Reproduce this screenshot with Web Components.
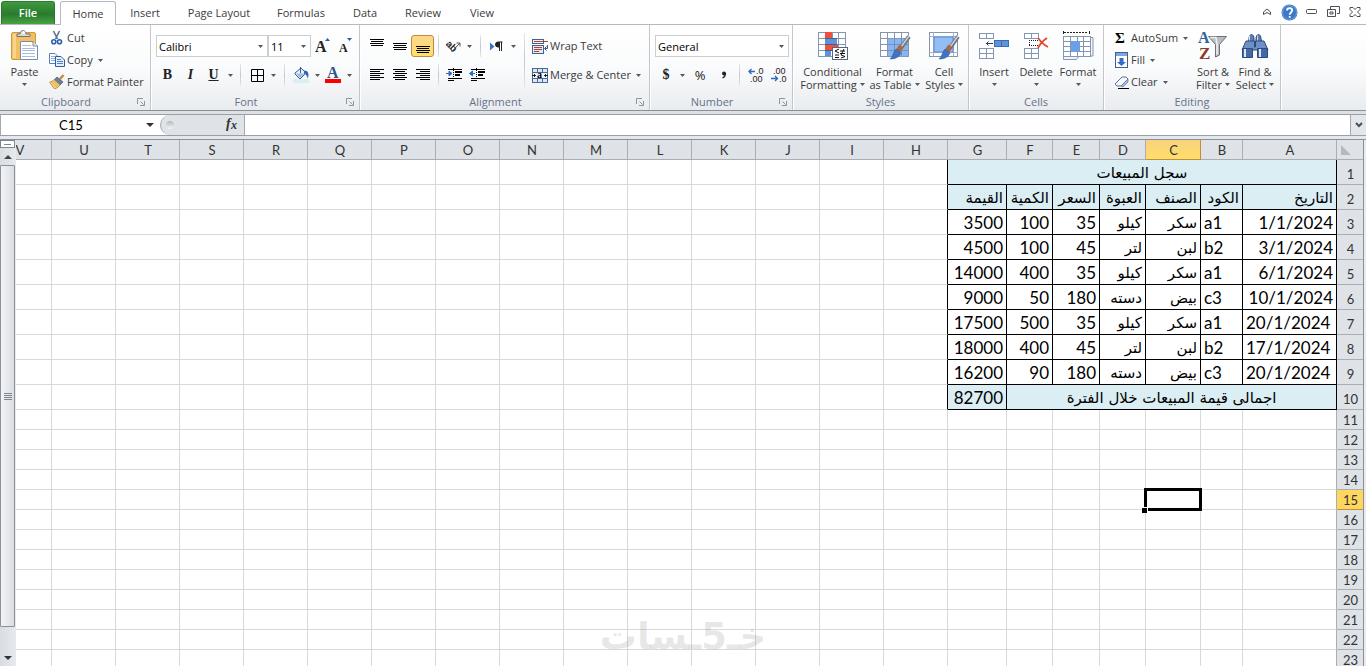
<!DOCTYPE html>
<html lang="en">
<head>
<meta charset="utf-8">
<meta name="viewport" content="width=device-width, initial-scale=1">
<title>Sales workbook</title>
<style>
  body { margin: 0; background: #fff; font-family: "Open Sans", "Noto Sans", sans-serif; font-size: 11px; color: #3b3b3b; }
</style>
</head>
<body>
<xl-app></xl-app>

<template id="app-template">
  <style>
    :host { display: flex; flex-direction: column; height: 100vh; overflow: hidden; }
    .tabs { display: flex; align-items: stretch; height: 25px; box-sizing: border-box; border-bottom: 1px solid #b6babf; }
    .window { margin-left: auto; display: flex; align-items: center; gap: 5px; padding-right: 3px; }
    .ribbon { display: flex; height: 85px; flex: none; background: linear-gradient(#ffffff, #fafbfc 50%, #e9ecef); border-bottom: 1px solid #8b9097; }
    .row { display: flex; align-items: center; height: 22px; }
    .rows { display: flex; flex-direction: column; gap: 7px; padding-top: 10px; }
    .list { display: flex; flex-direction: column; padding-top: 2px; }
    .mark { display: inline-block; font-family: "Liberation Serif", serif; font-weight: bold; font-size: 14px; line-height: 22px; color: #222; }
    .i { font-style: italic; }
    .u { text-decoration: underline; }
    .sep-tall { align-self: flex-start; margin-top: 8px; }
    xl-sheet { flex: 1; min-height: 0; }
  </style>
  <nav class="tabs">
    <xl-tab kind="file" style="--w:54px">File</xl-tab>
    <xl-tab kind="active" style="--w:56px">Home</xl-tab>
    <xl-tab style="--w:58px">Insert</xl-tab>
    <xl-tab style="--w:90px">Page Layout</xl-tab>
    <xl-tab style="--w:74px">Formulas</xl-tab>
    <xl-tab style="--w:54px">Data</xl-tab>
    <xl-tab style="--w:62px">Review</xl-tab>
    <xl-tab style="--w:56px">View</xl-tab>
    <div class="window">
      <xl-tool label="Minimize ribbon" style="--w:16px"><xl-icon name="caret"></xl-icon></xl-tool>
      <xl-tool label="Help" style="--w:18px"><xl-icon name="help"></xl-icon></xl-tool>
      <xl-tool label="Minimize window" style="--w:16px"><xl-icon name="min"></xl-icon></xl-tool>
      <xl-tool label="Restore window" style="--w:18px"><xl-icon name="restore"></xl-icon></xl-tool>
      <xl-tool label="Close window" style="--w:16px"><xl-icon name="close"></xl-icon></xl-tool>
    </div>
  </nav>
  <div class="ribbon">
    <xl-group label="Clipboard" launcher style="--group:151px;--pad:4px">
      <xl-big icon="paste" below style="--w:41px">Paste</xl-big>
      <div class="list" style="padding-left:4px">
        <xl-item icon="cut">Cut</xl-item>
        <xl-item icon="copy" menu>Copy</xl-item>
        <xl-item icon="painter">Format Painter</xl-item>
      </div>
    </xl-group>
    <xl-group label="Font" launcher style="--group:209px;--pad:5px">
      <div class="rows">
        <div class="row">
          <xl-select label="Font name" value="Calibri" style="--w:112px"></xl-select>
          <xl-select label="Font size" value="11" style="--w:43px"></xl-select>
          <xl-tool label="Grow font"><xl-icon name="grow"></xl-icon></xl-tool>
          <xl-tool label="Shrink font"><xl-icon name="shrink"></xl-icon></xl-tool>
        </div>
        <div class="row">
          <xl-tool label="Bold"><span class="mark">B</span></xl-tool>
          <xl-tool label="Italic"><span class="mark i">I</span></xl-tool>
          <xl-tool label="Underline"><span class="mark u">U</span></xl-tool>
          <xl-drop></xl-drop><xl-sep style="--w:11px"></xl-sep>
          <xl-tool label="Borders" style="--w:22px"><xl-icon name="borders"></xl-icon></xl-tool>
          <xl-drop></xl-drop><xl-sep></xl-sep>
          <xl-tool label="Fill color" style="--w:22px"><xl-icon name="bucket"></xl-icon></xl-tool>
          <xl-drop></xl-drop>
          <xl-tool label="Font color" style="--w:22px"><xl-icon name="fontcolor"></xl-icon></xl-tool>
          <xl-drop></xl-drop>
        </div>
      </div>
    </xl-group>
    <xl-group label="Alignment" launcher style="--group:290px;--pad:5px">
      <div class="rows">
        <div class="row">
          <xl-tool label="Top align"><xl-icon name="vtop"></xl-icon></xl-tool>
          <xl-tool label="Middle align"><xl-icon name="vmid"></xl-icon></xl-tool>
          <xl-tool label="Bottom align" pressed><xl-icon name="vbot"></xl-icon></xl-tool>
          <xl-sep style="--w:8px"></xl-sep>
          <xl-tool label="Orientation" style="--w:22px"><xl-icon name="orient"></xl-icon></xl-tool>
          <xl-drop></xl-drop><xl-sep></xl-sep>
          <xl-tool label="Text direction" style="--w:20px"><xl-icon name="rtl"></xl-icon></xl-tool>
          <xl-drop style="--w:14px"></xl-drop>
        </div>
        <div class="row">
          <xl-tool label="Align left"><xl-icon name="left"></xl-icon></xl-tool>
          <xl-tool label="Center"><xl-icon name="center"></xl-icon></xl-tool>
          <xl-tool label="Align right"><xl-icon name="right"></xl-icon></xl-tool>
          <xl-sep style="--w:8px"></xl-sep>
          <xl-tool label="Increase indent"><xl-icon name="indent"></xl-icon></xl-tool>
          <xl-tool label="Decrease indent"><xl-icon name="outdent"></xl-icon></xl-tool>
        </div>
      </div>
      <xl-sep class="sep-tall" style="--w:8px;--h:54px"></xl-sep>
      <div class="rows" style="padding-left:4px">
        <xl-item icon="wrap">Wrap Text</xl-item>
        <xl-item icon="merge" menu>Merge &amp; Center</xl-item>
      </div>
    </xl-group>
    <xl-group label="Number" launcher style="--group:143px;--pad:5px">
      <div class="rows">
        <div class="row"><xl-select label="Number format" value="General" style="--w:134px"></xl-select></div>
        <div class="row">
          <xl-tool label="Accounting format" style="--w:22px"><span class="mark">$</span></xl-tool>
          <xl-drop></xl-drop>
          <xl-tool label="Percent style" style="--w:26px"><span style="font-size:13px;color:#222">%</span></xl-tool>
          <xl-tool label="Comma style" style="--w:22px"><xl-icon name="comma"></xl-icon></xl-tool>
          <xl-sep style="--w:9px"></xl-sep>
          <xl-tool label="Increase decimal"><xl-icon name="decinc"></xl-icon></xl-tool>
          <xl-tool label="Decrease decimal"><xl-icon name="decdec"></xl-icon></xl-tool>
        </div>
      </div>
    </xl-group>
    <xl-group label="Styles" style="--group:176px;--pad:6px">
      <xl-big icon="cond" style="--w:67px">Conditional<span slot="more">Formatting</span></xl-big>
      <xl-big icon="fmttable" style="--w:57px">Format<span slot="more">as Table</span></xl-big>
      <xl-big icon="cellstyles" style="--w:42px">Cell<span slot="more">Styles</span></xl-big>
    </xl-group>
    <xl-group label="Cells" style="--group:135px;--pad:4px">
      <xl-big icon="insert" below style="--w:42px">Insert</xl-big>
      <xl-big icon="delete" below style="--w:42px">Delete</xl-big>
      <xl-big icon="format" below style="--w:42px">Format</xl-big>
    </xl-group>
    <xl-group label="Editing" style="--group:177px;--pad:9px">
      <div class="list" style="width:79px">
        <xl-item icon="sum" menu>AutoSum</xl-item>
        <xl-item icon="fill" menu>Fill</xl-item>
        <xl-item icon="clear" menu>Clear</xl-item>
      </div>
      <xl-big icon="sort" style="--w:42px">Sort &amp;<span slot="more">Filter</span></xl-big>
      <xl-big icon="find" style="--w:42px">Find &amp;<span slot="more">Select</span></xl-big>
    </xl-group>
  </div>
  <xl-formula></xl-formula>
  <xl-sheet></xl-sheet>
</template>

<script>
const NAVY = '#2f4a78';
const grid = (x, y, w, h, cols, rows, fill = '#fff', line = '#8596b3') => {
  let d = '';
  for (let c = 0; c <= cols; c++) d += `M${x + Math.round(c * w / cols) + .5} ${y}v${h + 1}`;
  for (let r = 0; r <= rows; r++) d += `M${x} ${y + Math.round(r * h / rows) + .5}h${w + 1}`;
  return `<rect x="${x}" y="${y}" width="${w}" height="${h}" fill="${fill}"/><path d="${d}" stroke="${line}" fill="none"/>`;
};
const bars = (list, color = '#000') => list.map(([x, y, w]) => `<rect x="${x}" y="${y}" width="${w}" height="1" fill="${color}"/>`).join('');
const brush = `<path d="M29 5.500L21 17" stroke="#6f7780" stroke-width="4"/><path d="M29 5L21 16" stroke="#c9ced4" stroke-width="1.500"/><path d="M21.500 15l-3.500 5" stroke="#a9683e" stroke-width="5"/><path d="M16 18l5 4c-2 4-5 6-11 6 3-2 3-7 6-10z" fill="#3f74c4" stroke="#2c5596" stroke-width=".5"/>`;

/* name: [width, height, markup] */
const ICONS = {
  caret: [10, 8, '<path d="M1.500 4L5 1l3.500 3v2.500L5 4.500 1.500 6.500z" fill="#fff" stroke="#4b4f55"/>'],
  help: [17, 17, '<circle cx="8.500" cy="8.500" r="8" fill="#3d78c8"/><circle cx="8.500" cy="8.500" r="7" fill="none" stroke="#6c9ee0"/><path d="M6 6.500c0-3.200 5.200-3.200 5.200 0 0 2-2.500 2-2.500 4.200M8.700 12v1.800" stroke="#fff" stroke-width="1.800" fill="none"/>'],
  min: [11, 6, '<rect x=".5" y=".5" width="10" height="4" rx="1" fill="#fff" stroke="#4b4f55"/>'],
  restore: [13, 12, '<path d="M3.500 3V.5h9v7H10" fill="none" stroke="#4b4f55"/><path d="M.5 3.500h8v7h-8zM3 6h3v2H3z" fill="#fff" stroke="#4b4f55"/>'],
  close: [12, 10, '<path d="M1 .5h3l2 2 2-2h3v2L8.500 5 11 7.500v2H8L6 7.500l-2 2H1v-2L3.500 5 1 2.500z" fill="#fff" stroke="#4b4f55"/>'],
  paste: [28, 32, '<rect x=".5" y="2.500" width="24" height="27" rx="1.500" fill="#f2c063" stroke="#cf993e"/><path d="M2 4h3v24H2z" fill="#f8d48c"/><path d="M6 6.500V4h3c0-4.500 6-4.500 6 0h4v2.500z" fill="#d8dadd" stroke="#6e7278"/><circle cx="12.500" cy="2.500" r="1.500" fill="#fff"/><path d="M9.500 11.500H22l4.500 4.500v13.500h-17z" fill="#fff" stroke="#7c8ba3"/><path d="M22 11.500V16h4.500" fill="#dfe8f5" stroke="#7c8ba3"/><path d="M11 15.500h9M11 18.500h13M11 20.500h13M11 23.500h13M11 26.500h13" stroke="#a9bddb"/>'],
  cut: [12, 14, '<path d="M2.500 0l4 8M8.500 0l-4 8" stroke="#5d7391" stroke-width="1.600"/><circle cx="2.800" cy="10.800" r="2" fill="none" stroke="#2a5db0" stroke-width="1.600"/><circle cx="8.500" cy="10.800" r="2" fill="none" stroke="#2a5db0" stroke-width="1.600"/>'],
  copy: [16, 14, '<path d="M.5.500H6L8.500 3v7.500h-8z" fill="#fff" stroke="#5c7db1"/><path d="M2 3.500h4M2 5.500h5M2 7.500h5" stroke="#8db0e2"/><path d="M6.500 3.500H12L15.500 7v6.500h-9z" fill="#e6effb" stroke="#2f5ea3"/><path d="M8 6.500h4M8 8.500h6M8 10.500h6" stroke="#4b82cc"/>'],
  painter: [16, 14, '<path d="M14.500 0L11 4" stroke="#c78c3c" stroke-width="2.500"/><path d="M8 2l6 5-3 3-6-5z" fill="#6a7f9d" stroke="#3f5472" stroke-width=".7"/><path d="M5 4.500l6 5.500c-2 3-5 4-6 3.500L.5 7C2 7 4 6 5 4.500z" fill="#f4d179" stroke="#b98628" stroke-width=".8"/><path d="M3 7l5 5M5 6l4 5" stroke="#c8983d" stroke-width=".6"/>'],
  grow: [16, 16, `<text x="0" y="14" font-family="Liberation Serif" font-weight="bold" font-size="16" fill="#222">A</text><path d="M10 3h5l-2.500-3z" fill="#2b5cb0"/>`],
  shrink: [14, 16, `<text x="0" y="14" font-family="Liberation Serif" font-weight="bold" font-size="12" fill="#222">A</text><path d="M8 0h5l-2.500 3z" fill="#2b5cb0"/>`],
  borders: [13, 13, '<path d="M.5.500h12v12H.5zM6.500.500v12M.5 6.500h12" fill="none" stroke="#000"/>'],
  bucket: [16, 16, '<rect x="0" y="12" width="16" height="4" fill="#daeef3"/><path d="M2 6l6-5 5 5-6 6-5-5z" fill="#e8f0fa" stroke="#3a5f96"/><path d="M3 6.500h9L7 11z" fill="#9dbbe4"/><path d="M7.500 6V0" stroke="#3a5f96"/><path d="M11 3.500c4.500 0 5 3.500 4 8-1.500-3-2-4.500-4-5z" fill="#2f62ae"/>'],
  fontcolor: [16, 16, `<text x="2" y="11" font-family="Liberation Serif" font-weight="bold" font-size="16" fill="#32508c">A</text><rect x="0" y="12" width="16" height="4" fill="#f00"/>`],
  vtop: [14, 16, bars([[0, 1, 14], [1, 3, 12], [0, 5, 14], [1, 7, 12]])],
  vmid: [14, 16, bars([[0, 5, 14], [1, 7, 12], [0, 9, 14], [1, 11, 12]])],
  vbot: [14, 16, bars([[0, 8, 14], [1, 10, 12], [0, 12, 14], [1, 14, 12]])],
  left: [14, 12, bars([[0, 0, 14], [0, 2, 10], [0, 4, 14], [0, 6, 10], [0, 8, 14], [0, 10, 10]])],
  center: [14, 12, bars([[0, 0, 14], [2, 2, 10], [0, 4, 14], [2, 6, 10], [0, 8, 14], [2, 10, 10]])],
  right: [14, 12, bars([[0, 0, 14], [4, 2, 10], [0, 4, 14], [4, 6, 10], [0, 8, 14], [4, 10, 10]])],
  orient: [15, 14, '<text transform="rotate(45 2 4)" x="1" y="7" font-family="Liberation Sans" font-size="10" font-weight="bold" fill="#222">ab</text><path d="M5.500 13L14 4M10.500 4H14v3.500" fill="none" stroke="#555"/>'],
  rtl: [13, 11, '<path d="M0 1.500v8L4.500 5.500z" fill="#3a74c4"/><path d="M12.500 1H8a2.500 2.500 0 0 0 0 5h1M9.500 1v9M11.500 1v9" fill="none" stroke="#222"/><path d="M8 1h1.500v5H8a2.500 2.500 0 0 1 0-5z" fill="#222"/>'],
  indent: [16, 14, bars([[2, 1, 14], [2, 10, 14], [2, 12, 5]]) + '<path d="M7.500 0v14" stroke="#000" stroke-dasharray="1 1"/><path d="M9 3h7v2H9zM9 6h5v2H9z" fill="#000"/><path d="M0 5.500h5M3 3l3 2.500L3 8z" fill="#2f6cc0" stroke="#2f6cc0"/>'],
  outdent: [16, 14, bars([[2, 1, 14], [2, 10, 14], [2, 12, 5]]) + '<path d="M7.500 0v14" stroke="#000" stroke-dasharray="1 1"/><path d="M9 3h7v2H9zM9 6h5v2H9z" fill="#000"/><path d="M1 5.500h5M3.500 3L.5 5.500l3 2.500z" fill="#2f6cc0" stroke="#2f6cc0"/>'],
  wrap: [16, 15, '<rect x=".5" y=".5" width="11" height="4" fill="#eef3fa" stroke="#47618f"/><path d="M2 2.500h14" stroke="#b2452b"/><rect x=".5" y="6.500" width="11" height="8" fill="#dfe8f5" stroke="#47618f"/><path d="M2 8.500h8M2 10.500h8M2 12.500h5" stroke="#b2452b"/><path d="M15.500 6v3.500H13M14.500 7.500l-2 2 2 2" fill="none" stroke="#2b5596"/>'],
  merge: [16, 15, '<rect x=".5" y=".5" width="15" height="14" fill="#dbe7f7" stroke="#4b6796"/><path d="M0 4.500h16M0 10.500h16M5.500 0v4M10.500 0v4M5.500 11v4M10.500 11v4" stroke="#4b6796"/><rect x="1" y="5" width="14" height="5" fill="#f4f8fd"/><path d="M0 7.500h4M2.500 6v3M16 7.500h-4M13.500 6v3" stroke="#222"/><text x="5" y="10" font-family="Liberation Serif" font-weight="bold" font-size="10" fill="#000">a</text>'],
  comma: [6, 8, '<circle cx="3" cy="2.500" r="2" fill="#222"/><path d="M4.500 2.500c0 2-1 3.500-3 4.500" fill="none" stroke="#222" stroke-width="1.300"/>'],
  decinc: [16, 14, '<path d="M1 3.500h6M3.500 1L1 3.500 3.500 6" fill="none" stroke="#2f6cc0" stroke-width="1.400"/><text x="8" y="6" font-family="Liberation Sans" font-size="9" fill="#222">.0</text><text x="2" y="14" font-family="Liberation Sans" font-size="9" fill="#222">.00</text>'],
  decdec: [16, 14, '<text x="2" y="6" font-family="Liberation Sans" font-size="9" fill="#222">.00</text><path d="M0 10.500h6M4 8l2.500 2.500L4 13" fill="none" stroke="#2f6cc0" stroke-width="1.400"/><text x="8" y="14" font-family="Liberation Sans" font-size="9" fill="#222">.0</text>'],
  cond: [30, 30, grid(0, 1, 27, 24, 4, 4) + '<path d="M7 1h7v6H7zM7 13h13v6H7z" fill="#f0503a"/><path d="M7 7h12v6H7zM7 19h6v6H7z" fill="#5b94dd"/><path d="M7 7.500h12M7 13.500h12M7 19.500h8" stroke="#41618f"/><rect x="14.500" y="16.500" width="15" height="12" fill="#fff" stroke="#54687f"/><path d="M21 18l-4 2 4 2M17 24h4M17 26.500h4M22 20h5M22 22.500h5M26 18l-3 6M23 24l4 1.500-4 1.500" fill="none" stroke="#111"/>'],
  fmttable: [30, 30, grid(0, 1, 28, 24, 4, 4) + '<path d="M8 8h20v17H8z" fill="#8ab6f0"/><path d="M7 13.500h21M7 19.500h21M14.500 7v18M21.500 7v18" stroke="#6a91cc"/>' + brush],
  cellstyles: [30, 30, grid(0, 1, 28, 24, 1, 1) + '<path d="M0 5.500h29M0 21.500h29M4.500 1v24M24.500 1v24" stroke="#a4b3cb"/><rect x="5" y="6" width="19" height="15" fill="#93bdf5" stroke="#5b8cd0"/>' + brush],
  insert: [30, 28, grid(0, 1, 14, 5, 2, 1) + grid(0, 16, 14, 10, 2, 2) + '<path d="M7 11.500h7M9.500 9.500l-2 2 2 2" fill="none" stroke="#2b3d5c"/><rect x="15.500" y="8.500" width="14" height="6" fill="#5b94dd" stroke="#3c6cad"/><path d="M22.500 8v7" stroke="#3c6cad"/>'],
  delete: [24, 28, grid(0, 1, 14, 5, 2, 1) + grid(0, 16, 14, 10, 2, 2) + '<path d="M5 8.500h10M5 13.500h10M5.500 8v6" stroke="#222" stroke-dasharray="1 1"/><path d="M14 6c3 4 6 7 10 9M23 6c-3 2-7 6-9 10" fill="none" stroke="#e8432b" stroke-width="1.800"/>'],
  format: [31, 30, '<path d="M1 1.500h24" stroke="#222" stroke-dasharray="2 1"/><path d="M.5 0v3M26.500 0v3" stroke="#222"/><path d="M1 25v3h13l2-3zM27 7h3v18h-3z" fill="#f0f4fa"/><path d="M27 6.500h3v18.500h-3M.5 25v3.500h13l2-3" fill="none" stroke="#8596b3"/>' + grid(0, 5, 27, 20, 4, 4) + '<rect x="8" y="10" width="9" height="11" fill="#6b9fe6"/>'],
  sum: [12, 14, '<text x="0" y="12" font-family="Liberation Serif" font-weight="bold" font-size="15" fill="#000">Σ</text>'],
  fill: [13, 16, '<rect x=".5" y=".5" width="12" height="15" fill="#fff" stroke="#41608f"/><path d="M1 1h11v3H1z" fill="#7aa6e6"/><path d="M4.500 6h4v4h2.500l-4.500 4-4.500-4h2.500z" fill="#2f6cc8"/>'],
  clear: [15, 13, '<path d="M1 8l7-7h4l2 2-7 7H3z" fill="#f4f7fc" stroke="#5b6f92"/><path d="M7 10l7-7v3l-5 5z" fill="#a9bfe3" stroke="#5b6f92" stroke-width=".7"/><path d="M4 12.500h11" stroke="#000"/>'],
  sort: [30, 30, `<text x="0" y="12" font-family="Liberation Serif" font-weight="bold" font-size="16" fill="#35609f">A</text><text x="1" y="28" font-family="Liberation Serif" font-weight="bold" font-size="17" fill="#8b3a2b">Z</text><path d="M10.500 5.500h18l-7 8V24l-4 2V13.500z" fill="#b9bdc2" stroke="#6c7176"/><path d="M12 6.500h6l1 7v10" fill="none" stroke="#f0f1f3" stroke-width="1.500"/>`],
  find: [28, 26, `<path d="M8 6c0-6 5-6 5 0v4H7zM15 6c0-6 5-6 5 0l1 4h-6z" fill="#5d7fb8" stroke="${NAVY}"/><path d="M5 8h8.500v6h1V8H23l4 9H1z" fill="#6f90c6" stroke="${NAVY}"/><path d="M1.500 15.500h10v9h-10zM16.500 15.500h10v9h-10z" fill="#4369a8" stroke="${NAVY}"/><path d="M4 16v8M19 16v8" stroke="#dbe6f6" stroke-width="2"/><path d="M8.500 2.500v5M16.500 2.500v5" stroke="#c9d7ee"/>`],
  drop: [5, 3, '<path d="M0 0h5L2.500 3z" fill="#55585d"/>'],
  dropbig: [8, 4, '<path d="M0 0h8L4 4z" fill="#333"/>'],
  launcher: [8, 8, '<path d="M.5 6V.5H6M3.500 3.500l3 3M7.500 3v4.500H3" fill="none" stroke="#8f959d"/>'],
  chevron: [8, 6, '<path d="M1 1l3 3 3-3" fill="none" stroke="#4b4f55" stroke-width="2"/>'],
  up: [8, 4, '<path d="M0 4h8L4 0z" fill="#444"/>'],
  fx: [13, 14, '<text x="0" y="11" font-family="Liberation Serif" font-style="italic" font-weight="bold" font-size="14" fill="#333">f</text><text x="5" y="12" font-family="Liberation Serif" font-style="italic" font-weight="bold" font-size="12" fill="#333">x</text>'],
  corner: [10, 10, '<path d="M0 0v10h10z" fill="#b4b9c0"/>'],
};

class Base extends HTMLElement {
  connectedCallback() {
    if (this.shadowRoot) return;
    this.attachShadow({ mode: 'open' }).innerHTML = this.view();
  }
  attr(n, d = '') { return this.getAttribute(n) ?? d; }
}
const BUTTON = 'button{border:0;margin:0;padding:0;background:none;font:inherit;color:inherit;}';

customElements.define('xl-icon', class extends Base {
  view() {
    const [w, h, body] = ICONS[this.attr('name')];
    return `<style>:host{display:inline-block;flex:none;width:${w}px;height:${h}px}svg{display:block;overflow:visible}</style>
      <svg width="${w}" height="${h}" viewBox="0 0 ${w} ${h}" aria-hidden="true">${body}</svg>`;
  }
});

customElements.define('xl-tab', class extends Base {
  view() {
    return `<style>${BUTTON}
      :host{display:flex;width:var(--w);flex:none}
      button{flex:1;text-align:center;line-height:24px;border:1px solid transparent;border-bottom:0;box-sizing:border-box}
      :host([kind=file]) {margin:0 5px 0 1px}
      :host([kind=file]) button{margin-top:1px;line-height:22px;color:#fff;background:linear-gradient(#3f9a3f,#2a7a2e 55%,#47a43f);border-color:#2b7a2e;border-radius:3px 3px 0 0;font-weight:600}
      :host([kind=active]) button{margin:1px 0 -1px;line-height:22px;background:#fff;border-color:#b6babf;border-radius:3px 3px 0 0}
    </style><button type="button"><slot></slot></button>`;
  }
});

customElements.define('xl-group', class extends Base {
  view() {
    return `<style>${BUTTON}
      :host{display:flex;flex-direction:column;width:var(--group);flex:none;box-sizing:border-box;border-right:1px solid #c3c7cd;box-shadow:1px 0 #fff}
      .body{display:flex;height:69px;padding-left:var(--pad)}
      .foot{display:flex;align-items:center;height:15px;color:#66728a}
      .foot span{flex:1;text-align:center}
      .foot button{display:flex;width:18px;justify-content:center}
    </style><div class="body"><slot></slot></div>
    <div class="foot"><span>${this.attr('label')}</span>${this.hasAttribute('launcher') ? '<button type="button" aria-label="More options"><xl-icon name="launcher"></xl-icon></button>' : ''}</div>`;
  }
});

customElements.define('xl-tool', class extends Base {
  view() {
    return `<style>${BUTTON}
      :host{display:inline-flex;width:var(--w,23px);height:22px;flex:none}
      button{flex:1;display:flex;align-items:center;justify-content:center;box-sizing:border-box;border-radius:3px;min-width:0}
      :host([pressed]) button{border:1px solid #c2893a;background:linear-gradient(#fbd78c,#ffe06a)}
    </style><button type="button" aria-label="${this.attr('label')}"><slot></slot></button>`;
  }
});

customElements.define('xl-drop', class extends Base {
  view() {
    return `<style>${BUTTON}:host{display:inline-flex;width:var(--w,10px);height:22px;flex:none}
      button{flex:1;display:flex;align-items:center;justify-content:center}</style>
      <button type="button" aria-label="Show menu"><xl-icon name="drop"></xl-icon></button>`;
  }
});

customElements.define('xl-sep', class extends Base {
  view() {
    return `<style>:host{display:flex;justify-content:center;width:var(--w,12px);height:var(--h,22px);flex:none}
      i{width:1px;background:linear-gradient(#e4e6e9,#c3c7cd,#e4e6e9)}</style><i></i>`;
  }
});

customElements.define('xl-item', class extends Base {
  view() {
    return `<style>${BUTTON}
      :host{display:flex;height:22px}
      button{display:flex;align-items:center;line-height:16px;white-space:nowrap}
      .ic{display:flex;justify-content:center;width:16px;margin-right:2px}
      .dd{margin-left:5px}
    </style><button type="button"><span class="ic"><xl-icon name="${this.attr('icon')}"></xl-icon></span><span><slot></slot></span>${this.hasAttribute('menu') ? '<xl-icon class="dd" name="drop"></xl-icon>' : ''}</button>`;
  }
});

customElements.define('xl-big', class extends Base {
  view() {
    return `<style>${BUTTON}
      :host{display:flex;width:var(--w);flex:none}
      button{flex:1;min-width:0;display:flex;flex-direction:column;align-items:center;padding-top:3px;line-height:13px;white-space:nowrap}
      .ic{display:flex;align-items:center;height:36px;padding-bottom:1px}
      .more{display:flex;align-items:center;gap:3px;height:13px}
    </style><button type="button"><span class="ic"><xl-icon name="${this.attr('icon')}"></xl-icon></span>
      <span><slot></slot></span><span class="more">${this.hasAttribute('below') ? '' : '<slot name="more"></slot>'}<xl-icon name="drop"></xl-icon></span></button>`;
  }
});

customElements.define('xl-select', class extends Base {
  view() {
    return `<style>
      :host{display:grid;width:var(--w);height:22px;flex:none;align-items:center}
      select,xl-icon{grid-area:1/1}
      select{appearance:none;width:100%;height:22px;border:1px solid #ccced2;border-radius:0;background:#fff;padding:0 2px;font:inherit;color:#000;margin:0}
      xl-icon{justify-self:end;margin-right:5px;pointer-events:none}
    </style><select aria-label="${this.attr('label')}"><option>${this.attr('value')}</option></select><xl-icon name="drop"></xl-icon>`;
  }
});

customElements.define('xl-formula', class extends Base {
  view() {
    return `<style>${BUTTON}
      :host{display:flex;flex:none;height:20px;border-top:1px solid #9a9fa6;border-bottom:1px solid #9a9fa6;margin:3px 0;box-shadow:0 -3px #dde1e6,0 3px #e4e7ee}
      input{border:0;padding:0;margin:0;outline:0;background:#fff;font-family:Lato,sans-serif;font-size:13px;color:#000;min-width:0}
      .name{width:140px;text-align:center;border-left:1px solid #a3a8af}
      .pick{display:flex;width:18px;align-items:center;justify-content:center}
      .tools{display:flex;align-items:center;justify-content:space-between;width:84px;box-sizing:border-box;margin-left:1px;padding:0 5px;background:#dfe2e7;border-left:1px solid #a3a8af;border-radius:10px 0 0 10px}
      .knob{width:8px;height:8px;border-radius:50%;background:linear-gradient(#b4b8be,#f4f5f7)}
      .fx{flex:1;border-left:1px solid #a3a8af;border-right:1px solid #a3a8af}
      .more{display:flex;width:15px;align-items:center;justify-content:center;background:#e3e6ea}
    </style>
    <input class="name" aria-label="Name box" value="C15">
    <button type="button" class="pick" aria-label="Choose a name"><xl-icon name="dropbig"></xl-icon></button>
    <div class="tools"><span class="knob"></span><button type="button" aria-label="Insert function"><xl-icon name="fx"></xl-icon></button></div>
    <input class="fx" aria-label="Formula">
    <button type="button" class="more" aria-label="Expand formula bar"><xl-icon name="chevron"></xl-icon></button>`;
  }
});

customElements.define('xl-scroll', class extends Base {
  view() {
    return `<style>${BUTTON}
      :host{display:flex;flex-direction:column;width:16px;flex:none;background:linear-gradient(90deg,#d9dce1,#e6e9ee)}
      button{display:flex;justify-content:center;align-items:center;height:17px}
      .split{height:8px;box-sizing:border-box;margin-right:1px;border:1px solid #80868e;background:#fff}
      .split i{width:7px;height:1px;background:#80868e}
      .track{flex:1;display:flex;flex-direction:column;padding-bottom:22px}
      .thumb{flex:1;display:flex;flex-direction:column;gap:1px;align-items:center;justify-content:center;margin-right:1px;border:1px solid #8b9199;border-radius:1px;background:linear-gradient(90deg,#f3f4f6,#dadde3)}
      .thumb i{width:8px;height:1px;background:#80868e}
    </style>
    <button type="button" class="split" aria-label="Split"><i></i></button>
    <button type="button" aria-label="Scroll up"><xl-icon name="up"></xl-icon></button>
    <div class="track"><div class="thumb"><i></i><i></i><i></i><i></i></div></div>
    <button type="button" aria-label="Scroll down"><xl-icon name="dropbig"></xl-icon></button>`;
  }
});

const WIDTHS = [94, 42, 55, 46, 47, 46, 59];
const HEADINGS = ['التاريخ', 'الكود', 'الصنف', 'العبوة', 'السعر', 'الكمية', 'القيمة'];
const SALES = [
  ['1/1/2024', 'a1', 'سكر', 'كيلو', 35, 100, 3500],
  ['3/1/2024', 'b2', 'لبن', 'لتر', 45, 100, 4500],
  ['6/1/2024', 'a1', 'سكر', 'كيلو', 35, 400, 14000],
  ['10/1/2024', 'c3', 'بيض', 'دسته', 180, 50, 9000],
  ['20/1/2024', 'a1', 'سكر', 'كيلو', 35, 500, 17500],
  ['17/1/2024', 'b2', 'لبن', 'لتر', 45, 400, 18000],
  ['20/1/2024', 'c3', 'بيض', 'دسته', 180, 90, 16200],
];

customElements.define('xl-sheet', class extends Base {
  rowCells(r) {
    const ar = t => /[\u0600-\u06ff]/.test(t) ? ' ar' : '';
    if (r === 1) return '<td class="k head ar mid" colspan="7">سجل المبيعات</td>';
    if (r === 2) return HEADINGS.map(t => `<td class="k head ar">${t}</td>`).join('');
    if (r === 10) return '<td class="k head ar mid" colspan="6">اجمالى قيمة المبيعات خلال الفترة</td><td class="k head">82700</td>';
    if (r < 10) return SALES[r - 3].map((t, i) => `<td class="k${ar(t)}${i === 1 || (i === 0 && r > 6) ? ' lt' : ''}">${t}</td>`).join('');
    return WIDTHS.map((_, i) => r === 15 && i === 2 ? '<td class="sel"><b></b></td>' : '<td></td>').join('');
  }
  view() {
    const cols = Math.min(26, Math.max(8, 7 + Math.ceil((innerWidth - 434) / 64)));
    const rows = Math.max(15, 10 + Math.ceil((innerHeight - 410) / 20));
    const names = [...Array(cols)].map((_, i) => String.fromCharCode(65 + i));
    const spare = cols - 7;
    let body = '';
    for (let r = 1; r <= rows; r++) {
      const used = r <= 10;
      body += `<tr class="${used ? 'tall' : ''}"><th scope="row" class="num${r === 15 ? ' on' : ''}">${r}</th>${this.rowCells(r)}${(used ? '<td class="edge"></td>' : '<td></td>') + '<td></td>'.repeat(spare - 1)}</tr>`;
    }
    return `<style>
      :host{display:flex;position:relative;overflow:hidden;border-top:1px solid #8b9097}
      .view{flex:1;min-width:0;overflow:hidden;direction:rtl}
      .rail{width:2px;flex:none;background:#e9ebef;border-left:1px solid #8b9097}
      table{table-layout:fixed;border-collapse:separate;border-spacing:0;width:${26 + 389 + spare * 64}px;font-family:Lato,"DejaVu Sans",sans-serif;font-size:17px;color:#000}
      th,td{box-sizing:border-box;padding:0 3px;height:20px;line-height:18px;border-right:1px solid #d8d9db;border-bottom:1px solid #d8d9db;overflow:hidden;white-space:nowrap}
      th{font-weight:normal;font-size:13px;color:#333;background:#dfe2e7;border-color:#a9adb4;padding:0 0 0 1px;text-align:center}
      tr.tall > *{height:25px;line-height:22px}
      tr.tall > td{padding-top:2px}
      thead th{height:20px;line-height:18px;padding:1px 0 0 1px}
      th.num{vertical-align:bottom;border-right:0}
      tr.tall th.num{line-height:20px}
      td{direction:ltr;text-align:right}
      .k{border-color:#000}
      th + td{border-right-color:#a9adb4}
      .edge{border-right-color:#000}
      .head{background:#daeef3}
      .lt{text-align:left}
      .ar{direction:rtl;font-family:"DejaVu Sans",sans-serif;font-size:15px}
      .mid{text-align:center}
      .on{background:#ffd75e;border-color:#c58b3f}
      thead .on{background:linear-gradient(#f9d27f,#ffdf68)}
      .sel{position:relative;overflow:visible}
      .sel b{position:absolute;inset:-2px -1px -2px -3px;border:3px solid #000}
      .sel b::after{content:"";position:absolute;left:-5px;bottom:-5px;width:5px;height:5px;background:#000;border:1px solid #fff;border-width:1px 1px 0 0}
      th.corner{text-align:right;vertical-align:middle;border-right:0}
      .corner xl-icon{display:block;margin:0 12px 0 auto}
      .brand{position:absolute;left:50%;bottom:5px;transform:translateX(-50%);font:bold 37px/48px "DejaVu Sans",sans-serif;color:#80808030;white-space:nowrap;direction:rtl;pointer-events:none}
    </style>
    <xl-scroll></xl-scroll>
    <div class="view"><table>
      <colgroup><col style="width:26px">${WIDTHS.map(w => `<col style="width:${w}px">`).join('')}${'<col style="width:64px">'.repeat(spare)}</colgroup>
      <thead><tr><th class="corner" aria-label="Select all"><xl-icon name="corner"></xl-icon></th>${names.map(n => `<th scope="col"${n === 'C' ? ' class="on"' : ''}>${n}</th>`).join('')}</tr></thead>
      <tbody>${body}</tbody>
    </table></div>
    <div class="rail"></div>
    <div class="brand">خـ5ـسات</div>`;
  }
});

customElements.define('xl-app', class extends HTMLElement {
  connectedCallback() {
    if (this.shadowRoot) return;
    this.attachShadow({ mode: 'open' }).append(document.getElementById('app-template').content.cloneNode(true));
  }
});
</script>
</body>
</html>
